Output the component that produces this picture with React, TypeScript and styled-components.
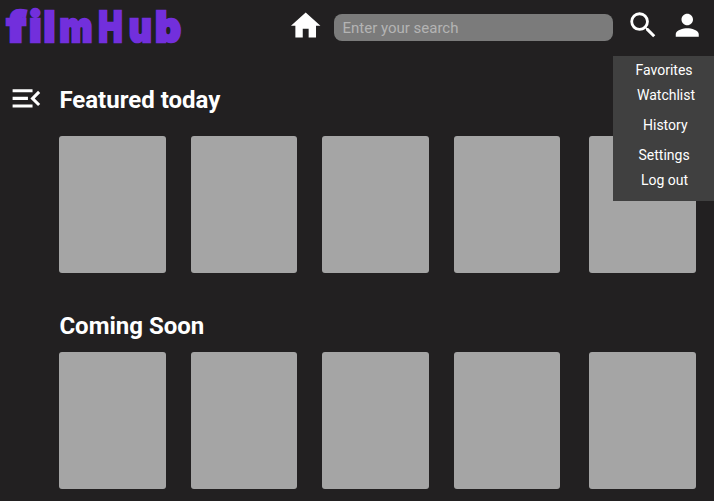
import React from 'react';
import styled, { createGlobalStyle } from 'styled-components';

const GlobalStyle = createGlobalStyle`
  * { box-sizing: border-box; }
  body { margin: 0; background: #222021; overflow: hidden; }
`;

const Page = styled.div`
  position: relative;
  width: 714px;
  height: 501px;
  overflow: hidden;
  background: #222021;
  color: #fff;
  font-family: Roboto, sans-serif;
`;

const Header = styled.header`
  display: flex;
  align-items: flex-start;
  height: 56px;
`;

const Logo = styled.svg`
  width: 190px;
  height: 56px;
  flex: none;
  fill: #722fdc;
  stroke: #722fdc;
  stroke-width: 2.6px;
  font-family: Inter, sans-serif;
  font-size: 42px;
  font-weight: 900;
`;

const Icon = styled.svg<{ $size: number; $left?: number; $top?: number }>`
  display: block;
  flex: none;
  width: ${(p) => p.$size}px;
  height: ${(p) => p.$size}px;
  margin-left: ${(p) => p.$left ?? 0}px;
  margin-top: ${(p) => p.$top ?? 0}px;
  fill: #fff;
`;

const SearchInput = styled.input`
  width: 279px;
  height: 27px;
  margin: 14px 0 0 10.8px;
  padding: 1px 8.5px 0;
  border: 0;
  border-radius: 8px;
  background: #7b7b7b;
  color: #fff;
  font: 400 15px Roboto, sans-serif;
  &::placeholder { color: #b4b4b4; opacity: 1; }
`;

const Menu = styled.nav`
  position: absolute;
  top: 56px;
  right: 0;
  width: 101px;
  height: 145px;
  padding-top: 4px;
  background: #404040;
`;

const MenuItem = styled.a<{ $indent: number; $height: number }>`
  display: block;
  height: ${(p) => p.$height}px;
  padding-left: ${(p) => p.$indent}px;
  font-size: 14px;
  line-height: 20px;
  white-space: nowrap;
`;

const Body = styled.div`
  display: grid;
  grid-template-columns: 59.4px 1fr;
`;

const Section = styled.section<{ $gap: number }>`
  display: flex;
  flex-direction: column;
  gap: ${(p) => p.$gap}px;
`;

const Content = styled.main`
  display: flex;
  flex-direction: column;
  gap: 39px;
  padding-top: 30px;
`;

const Title = styled.h2`
  margin: 0;
  font-size: 24px;
  font-weight: 700;
  line-height: 28px;
`;

const Shelf = styled.div`
  display: grid;
  grid-template-columns: 106.5px 106.5px 106.5px 111px 106.5px;
  column-gap: 24.9px;
`;

const Poster = styled.div`
  width: 106.5px;
  height: 137px;
  border-radius: 3px;
  background: #a5a5a5;
`;

const logoLetters = [
  { char: 'f', x: 6.8, stretch: 1.1 },
  { char: 'i', x: 29.2, stretch: 0.98 },
  { char: 'l', x: 43.8, stretch: 0.92 },
  { char: 'm', x: 59.4, stretch: 0.83 },
  { char: 'H', x: 98.6, stretch: 0.76 },
  { char: 'u', x: 129, stretch: 0.83 },
  { char: 'b', x: 155.3, stretch: 0.95 },
];

const menuItems = [
  { label: 'Favorites', indent: 22.5, height: 25 },
  { label: 'Watchlist', indent: 24, height: 30 },
  { label: 'History', indent: 30, height: 30 },
  { label: 'Settings', indent: 25.5, height: 25 },
  { label: 'Log out', indent: 28, height: 20 },
];

const sections = [
  { title: 'Featured today', gap: 22 },
  { title: 'Coming Soon', gap: 12 },
];

export default function App() {
  return (
    <Page>
      <GlobalStyle />
      <Header>
        <Logo viewBox="0 0 190 56" role="img" aria-label="filmHub">
          {logoLetters.map((l) => (
            <text key={l.char} transform={`translate(${l.x} 42) scale(${l.stretch} 1)`}>
              {l.char}
            </text>
          ))}
        </Logo>
        <Icon viewBox="0 0 24 24" $size={35.4} $left={97.8} $top={7.6}>
          <path d="M10 20v-6h4v6h5v-8h3L12 3 2 12h3v8z" />
        </Icon>
        <SearchInput placeholder="Enter your search" />
        <Icon viewBox="0 0 24 24" $size={34.3} $left={12.8} $top={7.9}>
          <path d="M15.5 14h-.79l-.28-.27A6.471 6.471 0 0 0 16 9.5 6.5 6.5 0 1 0 9.5 16c1.61 0 3.09-.59 4.23-1.57l.27.28v.79l5 4.99L20.49 19l-4.99-5zm-6 0C7.01 14 5 11.99 5 9.5S7.01 5 9.5 5 14 7.01 14 9.5 11.99 14 9.5 14z" />
        </Icon>
        <Icon viewBox="0 0 24 24" $size={34.5} $left={10.4} $top={8.2}>
          <path d="M12 12c2.21 0 4-1.79 4-4s-1.79-4-4-4-4 1.79-4 4 1.79 4 4 4zm0 2c-2.67 0-8 1.34-8 4v2h16v-2c0-2.66-5.33-4-8-4z" />
        </Icon>
      </Header>
      <Body>
        <Icon viewBox="0 0 24 24" $size={36.8} $left={8.3} $top={24.1}>
          <path d="M3 18h13v-2H3v2zm0-5h10v-2H3v2zm0-7v2h13V6H3zm18 9.59L17.42 12 21 8.41 19.59 7l-5 5 5 5L21 15.59z" />
        </Icon>
        <Content>
          {sections.map((s) => (
            <Section key={s.title} $gap={s.gap}>
              <Title>{s.title}</Title>
              <Shelf>
                {[0, 1, 2, 3, 4].map((n) => (
                  <Poster key={n} />
                ))}
              </Shelf>
            </Section>
          ))}
        </Content>
      </Body>
      <Menu>
        {menuItems.map((m) => (
          <MenuItem key={m.label} $indent={m.indent} $height={m.height}>
            {m.label}
          </MenuItem>
        ))}
      </Menu>
    </Page>
  );
}
